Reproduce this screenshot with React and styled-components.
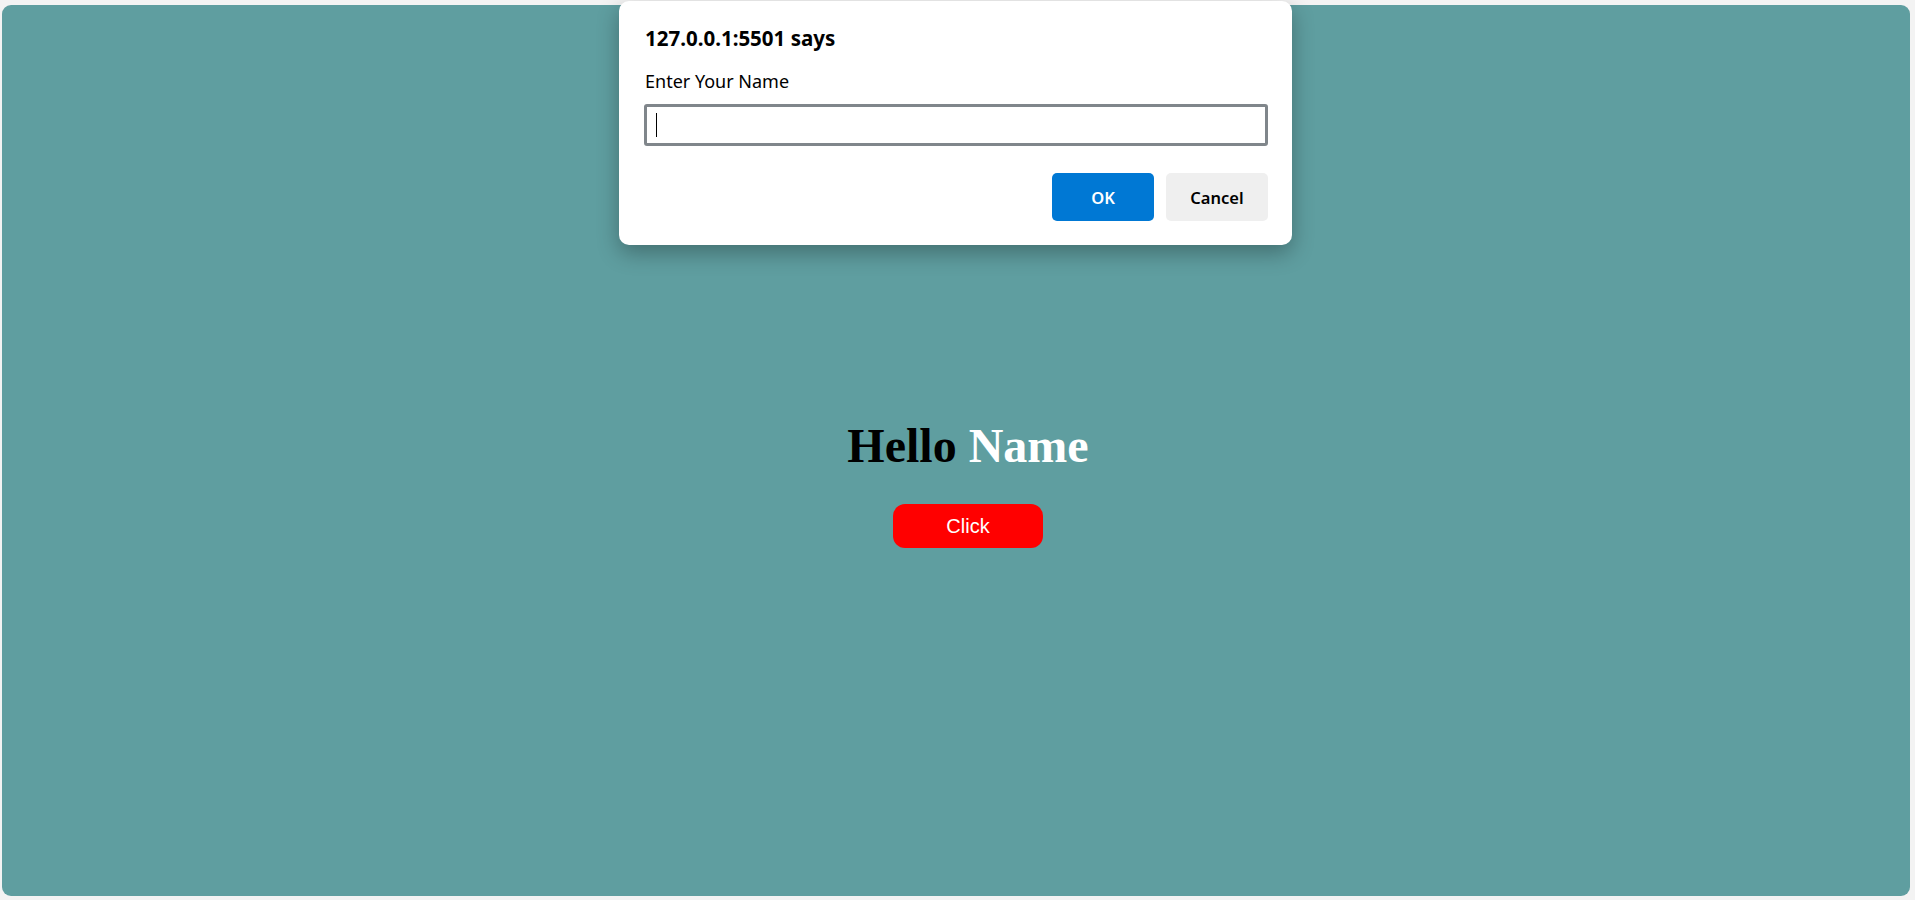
import React from "react";
import styled, { createGlobalStyle } from "styled-components";

const GlobalStyle = createGlobalStyle`
  html, body {
    margin: 0;
    padding: 0;
    background: #f3f3f3;
  }
  body {
    font-family: "Liberation Serif", serif;
  }
`;

const Page = styled.div`
  position: relative;
  height: 900px;
  padding: 5px 5px 4px 2px;
  box-sizing: border-box;
`;

const Panel = styled.main`
  height: 100%;
  background: #5f9ea0;
  border-radius: 9px;
  display: flex;
  flex-direction: column;
  align-items: center;
  padding: 413px 0 0 24px;
  box-sizing: border-box;
`;

const Heading = styled.h1`
  margin: 0;
  font-family: "Liberation Serif", "Times New Roman", serif;
  font-size: 48px;
  font-weight: bold;
  color: #000;
`;

const Highlight = styled.span`
  color: #fff;
`;

const ClickButton = styled.button`
  margin-top: 31px;
  width: 150px;
  height: 44px;
  border: none;
  border-radius: 12px;
  background: #ff0000;
  color: #fff;
  font-family: "Liberation Sans", Arial, sans-serif;
  font-size: 20px;
  cursor: pointer;
`;

// the browser's prompt() box, drawn over the page
const Dialog = styled.div`
  position: absolute;
  top: 1px;
  left: 619px;
  width: 673px;
  height: 244px;
  box-sizing: border-box;
  padding: 23px 24px 0 25px;
  background: #fff;
  border-radius: 10px;
  box-shadow: 0 8px 22px rgba(0, 0, 0, 0.3);
  font-family: "Noto Sans", "Open Sans", sans-serif;
  color: #000;
`;

const DialogTitle = styled.div`
  padding-left: 1px;
  font-size: 20.5px;
  font-weight: bold;
  line-height: 28px;
`;

const DialogText = styled.div`
  margin-top: 17px;
  padding-left: 1px;
  font-size: 18px;
  line-height: 24px;
`;

const Field = styled.div`
  margin-top: 11px;
  height: 42px;
  box-sizing: border-box;
  border: 3px solid #80868b;
  border-radius: 3px;
  display: flex;
  align-items: center;
  padding-left: 9px;
`;

const Caret = styled.span`
  width: 1px;
  height: 24px;
  background: #000;
`;

const Actions = styled.div`
  margin-top: 27px;
  display: flex;
  justify-content: flex-end;
  gap: 12px;
`;

const DialogButton = styled.button`
  width: 102px;
  height: 48px;
  border: none;
  border-radius: 5px;
  background: ${(p) => (p.$primary ? "#0078d4" : "#efefef")};
  color: ${(p) => (p.$primary ? "#fff" : "#000")};
  font-family: "Noto Sans", "Open Sans", sans-serif;
  font-size: 16.5px;
  font-weight: 600;
  cursor: pointer;
`;

export default function App() {
  return (
    <>
      <GlobalStyle />
      <Page>
        <Panel>
          <Heading>
            Hello <Highlight>Name</Highlight>
          </Heading>
          <ClickButton>Click</ClickButton>
        </Panel>
        <Dialog>
          <DialogTitle>127.0.0.1:5501 says</DialogTitle>
          <DialogText>Enter Your Name</DialogText>
          <Field>
            <Caret />
          </Field>
          <Actions>
            <DialogButton $primary>OK</DialogButton>
            <DialogButton>Cancel</DialogButton>
          </Actions>
        </Dialog>
      </Page>
    </>
  );
}
